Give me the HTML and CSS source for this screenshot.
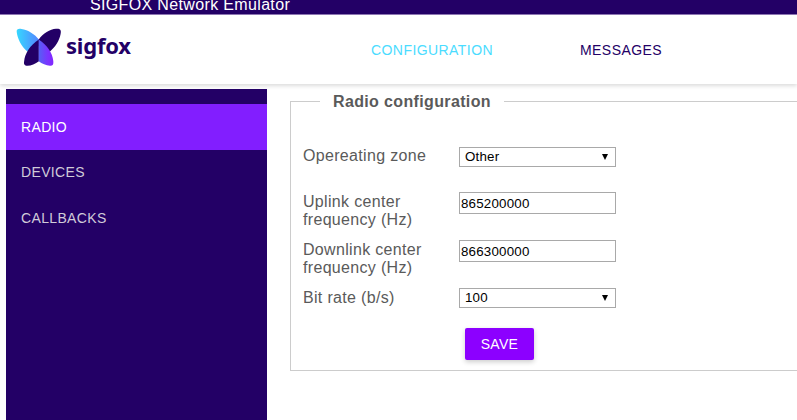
FILE: index.html
```html
<!DOCTYPE html>
<html lang="en">
<head>
<meta charset="utf-8">
<title>SIGFOX Network Emulator</title>
<link rel="stylesheet" href="styles.css">
</head>
<body>
<div class="topbar"><span>SIGFOX Network Emulator</span></div>
<header class="header">
  <div class="logo">
    <svg class="mark" width="46" height="40" viewBox="16 27 46 40" aria-hidden="true">
      <defs>
        <linearGradient id="cyan" x1="0" x2="1"><stop offset="0" stop-color="#35d8ff"/><stop offset="1" stop-color="#5485ff"/></linearGradient>
        <linearGradient id="violet" x1="0" x2="1"><stop offset="0" stop-color="#5560f4"/><stop offset=".6" stop-color="#7a35ff"/><stop offset="1" stop-color="#8226ff"/></linearGradient>
      </defs>
      <path fill="url(#cyan)" d="M16.700 32C16.300 29 18.500 28.500 21.500 29C28 29.700 35 34.500 38.900 39.500V46L27.600 51.800C21 46 17.500 38.500 16.700 32Z"/>
      <path fill="#230066" d="M38.700 39.500C43 33.500 50 29.300 56 28.800C60 28.300 61.600 30 60.600 34C59.400 40.500 55.500 46.700 49.700 51.800L38.700 46Z"/>
      <path fill="#230066" d="M38.900 39.500V61.300C35.500 63.800 31 65.800 27.500 65.800C24.300 65.800 23.700 64 24.100 61.500C25 53 30 45.500 38.900 39.500Z"/>
      <path fill="url(#violet)" d="M38.700 39.500C47.500 45.500 52.500 53 53.300 61C53.700 64.500 52.700 66 50 65.800C46 65.500 42 63.800 38.700 61.300Z"/>
    </svg>
    <span class="brand">sigfox</span>
  </div>
  <nav class="nav"><a class="current">CONFIGURATION</a><a>MESSAGES</a></nav>
</header>
<main class="layout">
  <aside class="sidebar"><a class="active">RADIO</a><a>DEVICES</a><a>CALLBACKS</a></aside>
  <form class="content">
    <fieldset>
      <legend>Radio configuration</legend>
      <div class="row zone"><label for="zone">Opereating zone</label><span class="select"><select id="zone"><option>Other</option></select></span></div>
      <div class="row"><label for="up">Uplink center frequency (Hz)</label><input id="up" value="865200000"></div>
      <div class="row"><label for="down">Downlink center frequency (Hz)</label><input id="down" value="866300000"></div>
      <div class="row rate"><label for="rate">Bit rate (b/s)</label><span class="select"><select id="rate"><option>100</option></select></span></div>
      <button type="button">SAVE</button>
    </fieldset>
  </form>
</main>
</body>
</html>
```
FILE: styles.css
```css
* { box-sizing: border-box; }
body { margin: 0; height: 420px; overflow: hidden; background: #fff; color: #5a5a5a; font: 16px/18px "Liberation Sans", Arial, sans-serif; }
.topbar { height: 15px; padding-left: 90px; background: #230066; border-bottom: 1px solid #9078b5; color: #fff; display: flex; align-items: flex-end; white-space: nowrap; letter-spacing: .35px; }
.topbar span { line-height: 18px; }
.header { height: 69px; display: flex; background: #fff; box-shadow: 0 2px 4px rgba(0,0,0,.14); }
.logo { width: 371px; padding: 12px 0 0 16px; display: flex; }
.mark { display: block; flex: none; }
.brand { margin: 3px 0 0 4px; color: #230066; font: 700 22px/30px "Noto Sans", sans-serif; letter-spacing: -.2px; }
.nav { display: flex; gap: 87px; padding-top: 26px; font-size: 14px; letter-spacing: .43px; color: #230066; }
.nav .current { color: #4bdcff; }
.layout { display: flex; padding: 5px 0 0 6px; }
.sidebar { width: 261px; height: 331px; padding-top: 15px; background: #230066; flex: none; font-size: 14px; letter-spacing: .35px; color: #d0cbd9; }
.sidebar a { display: block; height: 46px; padding-left: 15px; line-height: 46px; }
.sidebar a + a { position: relative; top: -1px; }
.sidebar .active { background: #821eff; color: #fff; }
.content { margin-left: 23px; padding-top: 3px; }
fieldset { width: 530px; height: 279px; margin: 0; padding: 0 0 0 12px; border: 1px solid #ccc; }
legend { margin-left: 17px; padding: 0 13px; font-weight: 700; line-height: 18px; letter-spacing: .36px; position: relative; top: 1px; }
.row { display: flex; height: 48px; align-items: flex-start; }
.row label { width: 156px; padding: 1px 20px 0 0; flex: none; letter-spacing: .32px; }
.zone { margin-top: 37px; height: 45px; }
.row.zone label { padding-top: 0; }
.rate { height: 40px; }
input, select { display: block; width: 157px; margin: 0; background: #fff; color: #000; border: 1px solid #a9a9a9; border-radius: 0; font: 13.33px/18px "Liberation Sans", Arial, sans-serif; letter-spacing: .2px; }
input { height: 22px; padding: 1px; }
select { appearance: none; height: 20px; padding: 0 5px; }
.select { position: relative; }
.select::after { content: ""; position: absolute; right: 8px; top: 7px; border: solid transparent; border-width: 6px 3.500px 0; border-top-color: #000; }
button { display: block; width: 69px; height: 32px; margin-left: 162px; padding: 0; border: 0; border-radius: 2px; background: #8c00ff; color: #fff; font: 14px/32px "Liberation Sans", Arial, sans-serif; letter-spacing: .3px; box-shadow: 0 2px 5px rgba(0,0,0,.2); }
```
